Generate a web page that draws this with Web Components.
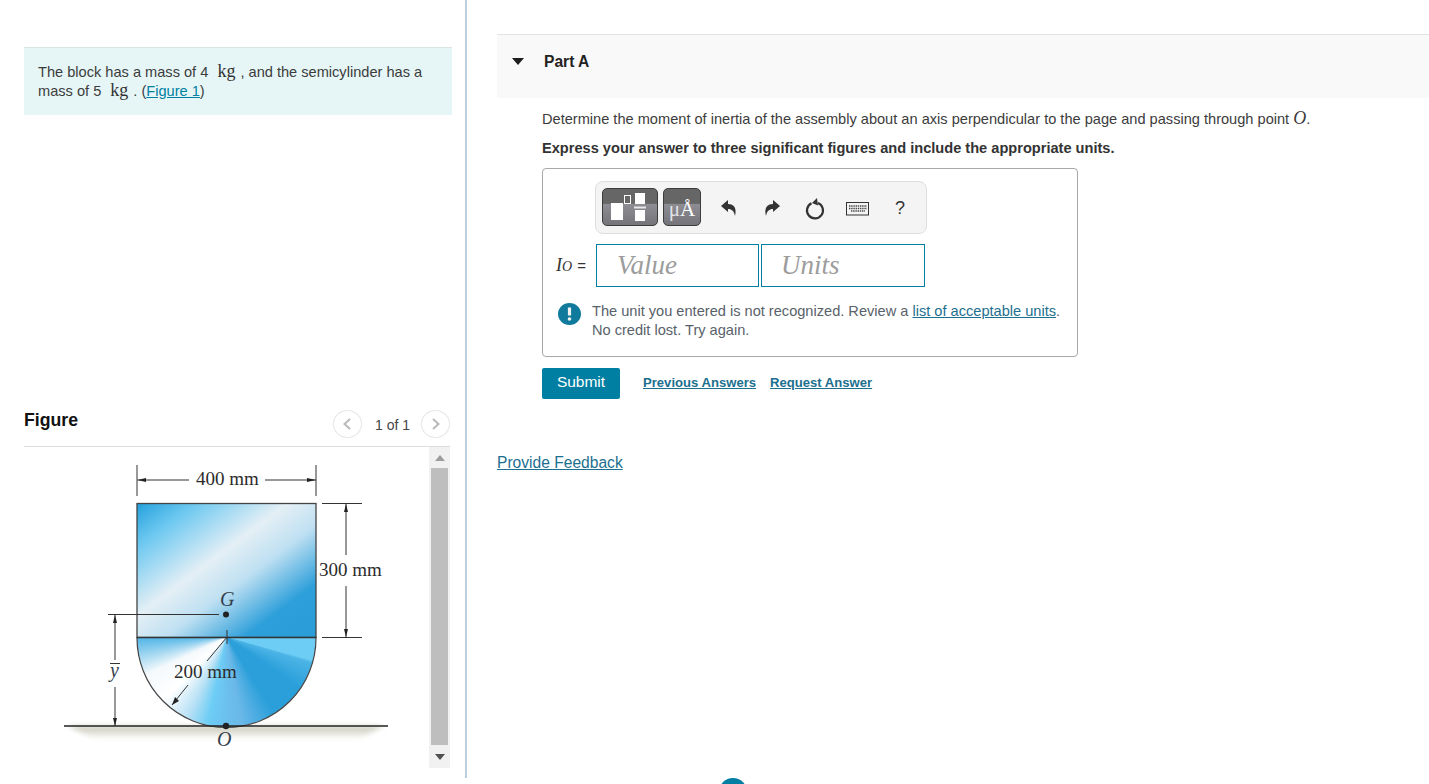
<!DOCTYPE html>
<html lang="en">
<head>
<meta charset="utf-8">
<title>Part A</title>
<style>
  html, body { margin: 0; height: 100%; overflow: hidden; background: #fff; }
  body { font: 14.6px/19px "Liberation Sans", Arial, sans-serif; color: #3c3c3c; }
</style>
</head>
<body>
<assignment-page>
  <intro-panel slot="left">
    <intro-line>The block has a mass of 4 <unit-kg></unit-kg>, and the semicylinder has a</intro-line>
    <intro-line>mass of 5 <unit-kg></unit-kg>. (<a href="#" style="color:#007fa3">Figure 1</a>)</intro-line>
  </intro-panel>
  <figure-panel slot="left"></figure-panel>
  <part-header slot="right">Part A</part-header>
  <part-body slot="right"></part-body>
</assignment-page>
<float-dot></float-dot>

<script>
class AssignmentPage extends HTMLElement {
  constructor() {
    super();
    this.attachShadow({ mode: "open" }).innerHTML = `
      <style>
        :host { display: flex; height: 778px; }
        .left { width: 467px; box-sizing: border-box; padding: 47px 13px 0 24px; border-right: 2px solid #bccfe0; flex: none; }
        .right { flex: 1; min-width: 0; padding: 34px 0 0 30px; }
      </style>
      <div class="left"><slot name="left"></slot></div>
      <div class="right"><slot name="right"></slot></div>`;
  }
}

class UnitKg extends HTMLElement {
  constructor() {
    super();
    this.attachShadow({ mode: "open" }).innerHTML = `
      <style>
        :host { display: inline; font: 18px/0 "Liberation Serif", serif; color: #333; margin: 0 5px 0 5px; }
      </style>kg`;
  }
}

class IntroLine extends HTMLElement {
  constructor() {
    super();
    this.attachShadow({ mode: "open" }).innerHTML = `
      <style>
        :host { display: block; height: 19px; white-space: nowrap; }
      </style>
      <slot></slot>`;
  }
}

class IntroPanel extends HTMLElement {
  constructor() {
    super();
    this.attachShadow({ mode: "open" }).innerHTML = `
      <style>
        :host { display: block; background: #e6f6f6; border-top: 1px solid #dbe3e3; padding: 15px 14px 14px 14px; height: 38px; }
      </style>
      <slot></slot>`;
  }
}

class FigurePanel extends HTMLElement {
  constructor() {
    super();
    this.attachShadow({ mode: "open" }).innerHTML = `
      <style>
        :host { display: block; margin: 292px 2px 0 0; }
        .head { display: flex; align-items: center; height: 39px; border-bottom: 1px solid #ddd; }
        h2 { margin: 0 0 13px; font: bold 17.7px/22px "Liberation Sans", sans-serif; color: #111; flex: 1; }
        .pager { display: flex; align-items: center; margin-bottom: 5px; }
        .pager span { font-size: 14px; color: #444; margin: 0 11px 0 13px; position: relative; top: 1px; }
        .rnd { width: 27px; height: 26px; border: 1px solid #e6e6e6; border-radius: 50%; display: flex; align-items: center; justify-content: center; }
        .body { display: flex; height: 321px; }
        .art { flex: 1; }
        fig-scroll { flex: none; }
      </style>
      <div class="head">
        <h2>Figure</h2>
        <div class="pager">
          <div class="rnd"><svg width="10" height="14"><path d="M8 2 2.5 7 8 12" fill="none" stroke="#b9b9b9" stroke-width="2"/></svg></div>
          <span>1 of 1</span>
          <div class="rnd"><svg width="10" height="14"><path d="M2 2 7.5 7 2 12" fill="none" stroke="#b9b9b9" stroke-width="2"/></svg></div>
        </div>
      </div>
      <div class="body">
        <div class="art"><fig-diagram></fig-diagram></div>
        <fig-scroll></fig-scroll>
      </div>`;
  }
}

class FigScroll extends HTMLElement {
  constructor() {
    super();
    this.attachShadow({ mode: "open" }).innerHTML = `
      <style>
        :host { display: flex; flex-direction: column; align-items: center; width: 21px; height: 321px; background: #f1f1f1; }
        .end { height: 21px; display: flex; align-items: center; justify-content: center; }
        .thumb { width: 17px; flex: 1; background: #bebebe; }
      </style>
      <div class="end"><svg width="10" height="6"><path d="M5 0 10 6H0Z" fill="#9c9c9c"/></svg></div>
      <div class="thumb"></div>
      <div class="end" style="height:23px"><svg width="10" height="6"><path d="M0 0H10L5 6Z" fill="#505050"/></svg></div>`;
  }
}

// figure coordinates are page coordinates minus the art box origin (24,447)
class FigDiagram extends HTMLElement {
  constructor() {
    super();
    this.attachShadow({ mode: "open" }).innerHTML = `
      <style>
        :host { display: block; width: 405px; height: 321px; }
        svg { display: block; }
        text { font-family: "Liberation Serif", serif; font-size: 19px; fill: #2c2c2c; }
        .it { font-style: italic; fill: #33414d; font-size: 20px; }
        .fan { width: 179px; height: 90px; border-radius: 0 0 90px 90px;
          background: conic-gradient(from 90deg at 50% 0,
            #6dcdf5 0deg, #6dcdf5 15deg, #4cb4e6 17deg, #2a9fda 35deg, #2a9fda 58deg,
            #6ab8e8 80deg, #6cc0ee 90deg, #6dcdf5 102deg, #b9e1f5 116deg, #fff 135deg,
            #f4f9fc 155deg, #4fb4e6 180deg); }
      </style>
      <svg width="405" height="321" viewBox="0 0 405 321">
        <defs>
          <linearGradient id="blk" x1="0" y1="0" x2="1" y2="1">
            <stop offset="0" stop-color="#25a0dc"/>
            <stop offset=".16" stop-color="#6cc8f0"/>
            <stop offset=".42" stop-color="#e4eff5"/>
            <stop offset=".58" stop-color="#bfe0f2"/>
            <stop offset=".8" stop-color="#2d9fda"/>
            <stop offset="1" stop-color="#2a9dd8"/>
          </linearGradient>
          <linearGradient id="shade" x1="0" y1="0" x2="0" y2="1">
            <stop offset="0" stop-color="#c4c4b4"/>
            <stop offset="1" stop-color="#fff"/>
          </linearGradient>
          <filter id="soft" x="-5%" y="-50%" width="110%" height="200%"><feGaussianBlur stdDeviation="2.5"/></filter>
        </defs>
        <path d="M44 279H360L334 292H70Z" fill="url(#shade)" filter="url(#soft)"/>
        <rect x="113" y="56.500" width="179" height="134" fill="url(#blk)" stroke="#444" stroke-width="1.300"/>
        <foreignObject x="113" y="190" width="179" height="90"><div class="fan" xmlns="http://www.w3.org/1999/xhtml"></div></foreignObject>
        <path d="M113 190V191A89.500 89.500 0 0 0 292 191V190" fill="none" stroke="#444" stroke-width="1.200"/>
        <path d="M113 190.500H292" stroke="#333" stroke-width="1.300"/>
        <g fill="none" stroke="#333" stroke-width="1">
          <path d="M113 18V49M292 18V49M113.500 33H165M241 33H292"/>
          <path d="M298 56.500H338M298 190.500H338M322 57V108M322 139V190"/>
          <path d="M84 167.500H195M91 168V213M91 240V279"/>
          <path d="M203 183V197M197 190.500H209M203 190 183 214M164 238 148 258"/>
        </g>
        <path d="M40 279H364" stroke="#222" stroke-width="1.300"/>
        <g fill="#222">
          <path d="M113.500 33 122 31V35ZM292 33 283 31V35Z"/>
          <path d="M322 57 320 65H324ZM322 190 320 182H324Z"/>
          <path d="M91 168 89 176H93ZM91 279 89 271H93Z"/>
          <path d="M148 258 151 250 155 254Z"/>
          <circle cx="202" cy="167.500" r="3"/>
          <circle cx="202" cy="279" r="3.200"/>
        </g>
        <text x="172" y="37.500">400 mm</text>
        <text x="295" y="129">300 mm</text>
        <text x="150" y="230.500">200 mm</text>
        <text class="it" x="196" y="158.500">G</text>
        <text class="it" x="193" y="298.500">O</text>
        <text class="it" x="86" y="230">y</text>
        <path d="M86 216.500H96" stroke="#333"/>
      </svg>`;
  }
}

class PartHeader extends HTMLElement {
  constructor() {
    super();
    this.attachShadow({ mode: "open" }).innerHTML = `
      <style>
        :host { display: flex; align-items: flex-start; height: 63px; background: #f9f9f9; border-top: 1px solid #e3e3e3; font-weight: bold; color: #222; }
        svg { margin: 23px 20px 0 15px; }
        span { margin-top: 17px; font-size: 15.600px; }
      </style>
      <svg width="12" height="7"><path d="M0 0H12L6 7Z" fill="#1e1e1e"/></svg>
      <span><slot></slot></span>`;
  }
}

class MathToolbar extends HTMLElement {
  constructor() {
    super();
    this.attachShadow({ mode: "open" }).innerHTML = `
      <style>
        :host { display: flex; align-items: center; box-sizing: border-box; width: 332px; height: 53px; margin-left: 52px; padding-left: 6px;
          background: #f4f4f4; border: 1px solid #dedede; border-radius: 8px; }
        .tb { height: 38px; box-sizing: border-box; border: 1px solid #3c3c3c; border-radius: 5px; margin: -1px 5px 0 0; overflow: hidden;
          background: linear-gradient(#666 0, #666 40%, #8d8d93 42%, #74747a 100%); }
        .mu { width: 38px; color: #fff; font: 21px/41px "Liberation Serif", serif; text-align: center; }
        .mu i { font-style: normal; color: #e2e2e6; }
        .q { font-size: 18px; color: #333; margin-top: 2px; }
      </style>
      <div class="tb" style="width:56px">
        <svg width="54" height="36" style="display:block">
          <rect x="8" y="14" width="12" height="17" fill="#fff"/>
          <rect x="21.500" y="6.500" width="6" height="8" fill="none" stroke="#fff"/>
          <rect x="32" y="4" width="10" height="11" fill="#fff"/>
          <rect x="31" y="17.500" width="12" height="2" fill="#e8e8e8"/>
          <rect x="32" y="21" width="10" height="11" fill="#fff"/>
        </svg>
      </div>
      <div class="tb mu"><i>μ</i>Å</div>
      <svg style="margin-left:14px" width="18" height="18" viewBox="0 0 18 18"><path d="M1 7 8 1V5C14 5 17 9 15 17 14 12 12 10 8 10V13Z" fill="#333"/></svg>
      <svg style="margin-left:25px" width="18" height="18" viewBox="0 0 18 18"><path d="M17 7 10 1V5C4 5 1 9 3 17 4 12 6 10 10 10V13Z" fill="#333"/></svg>
      <svg style="margin:2px 0 0 24px" width="20" height="22" viewBox="0 0 20 22"><path d="M6.500 5.200A8 8 0 1 0 13 5" fill="none" stroke="#333" stroke-width="2.200"/><path d="M12 0 7 5 13 7.500Z" fill="#333"/></svg>
      <svg style="margin:3px 0 0 21px" width="24" height="14" viewBox="0 0 24 14"><rect x=".5" y=".5" width="22" height="12.500" fill="#f4f4f4" stroke="#333"/><path d="M3 4H21M3 6.500H21M5 9H19" stroke="#444" stroke-width="1.300" stroke-dasharray="1.400 .8"/></svg>
      <span class="q" style="margin-left:25px">?</span>`;
  }
}

class AnswerRow extends HTMLElement {
  constructor() {
    super();
    this.attachShadow({ mode: "open" }).innerHTML = `
      <style>
        :host { display: flex; align-items: center; margin: 10px 0 0 13px; }
        .lbl { width: 40px; font: 15px "Liberation Sans", sans-serif; color: #333; }
        .lbl i { font: italic 18px "Liberation Serif", serif; }
        .lbl em { font: italic 14px "Liberation Serif", serif; margin-right: 1px; }
        .box { width: 163px; height: 43px; box-sizing: border-box; border: 1px solid #007fa3; margin-right: 2px; padding-left: 20px;
          font: italic 27px/41px "Liberation Serif", serif; color: #9c9c9c; }
      </style>
      <div class="lbl"><i>I</i><em>O</em> =</div>
      <div class="box">Value</div>
      <div class="box" style="width:164px;padding-left:19px">Units</div>`;
  }
}

class UnitFeedback extends HTMLElement {
  constructor() {
    super();
    this.attachShadow({ mode: "open" }).innerHTML = `
      <style>
        :host { display: flex; margin: 15px 0 0 15px; color: #59626a; }
        svg { flex: none; margin: 1px 11px 0 0; }
        a { color: #1c6f8f; }
      </style>
      <svg width="23" height="22" viewBox="0 0 23 22"><ellipse cx="11.500" cy="11" rx="11.500" ry="11" fill="#0f7a9b"/><path d="M11.500 4.500V12.500" stroke="#f2f2f2" stroke-width="3.200"/><circle cx="11.500" cy="16" r="1.800" fill="#f2f2f2"/></svg>
      <div>The unit you entered is not recognized. Review a <a href="#">list of acceptable units</a>.<br>No credit lost. Try again.</div>`;
  }
}

class PartBody extends HTMLElement {
  constructor() {
    super();
    this.attachShadow({ mode: "open" }).innerHTML = `
      <style>
        :host { display: block; padding-left: 45px; }
        p { margin: 0; }
        .q { margin-top: 10px; }
        .q i { font: italic 18px "Liberation Serif", serif; }
        .ex { margin-top: 10px; font-weight: bold; color: #333; }
        .ans { box-sizing: border-box; width: 536px; height: 189px; margin-top: 10px; padding-top: 12px; border: 1px solid #a8a8a8; border-radius: 4px; }
        .acts { display: flex; align-items: center; margin-top: 11px; }
        .submit { width: 78px; height: 31px; background: #007fa3; color: #fff; border-radius: 2px; text-align: center; line-height: 28px; font-size: 15.500px; margin-right: 23px; }
        .acts a { font-weight: bold; font-size: 13.100px; color: #1c6f8f; margin-right: 14px; position: relative; top: -1px; }
        .fb { display: block; margin: 54px 0 0 -45px; font-size: 15.600px; color: #1c6f8f; }
      </style>
      <p class="q">Determine the moment of inertia of the assembly about an axis perpendicular to the page and passing through point <i>O</i>.</p>
      <p class="ex">Express your answer to three significant figures and include the appropriate units.</p>
      <div class="ans">
        <math-toolbar></math-toolbar>
        <answer-row></answer-row>
        <unit-feedback></unit-feedback>
      </div>
      <div class="acts">
        <div class="submit">Submit</div>
        <a href="#">Previous Answers</a>
        <a href="#">Request Answer</a>
      </div>
      <a class="fb" href="#">Provide Feedback</a>`;
  }
}

class FloatDot extends HTMLElement {
  constructor() {
    super();
    this.attachShadow({ mode: "open" }).innerHTML = `
      <style>
        :host { position: fixed; left: 719px; top: 778px; width: 28px; height: 28px; border-radius: 50%; background: #007fa3; }
      </style>`;
  }
}

customElements.define("assignment-page", AssignmentPage);
customElements.define("unit-kg", UnitKg);
customElements.define("intro-line", IntroLine);
customElements.define("intro-panel", IntroPanel);
customElements.define("figure-panel", FigurePanel);
customElements.define("fig-scroll", FigScroll);
customElements.define("fig-diagram", FigDiagram);
customElements.define("part-header", PartHeader);
customElements.define("math-toolbar", MathToolbar);
customElements.define("answer-row", AnswerRow);
customElements.define("unit-feedback", UnitFeedback);
customElements.define("part-body", PartBody);
customElements.define("float-dot", FloatDot);
</script>
</body>
</html>
